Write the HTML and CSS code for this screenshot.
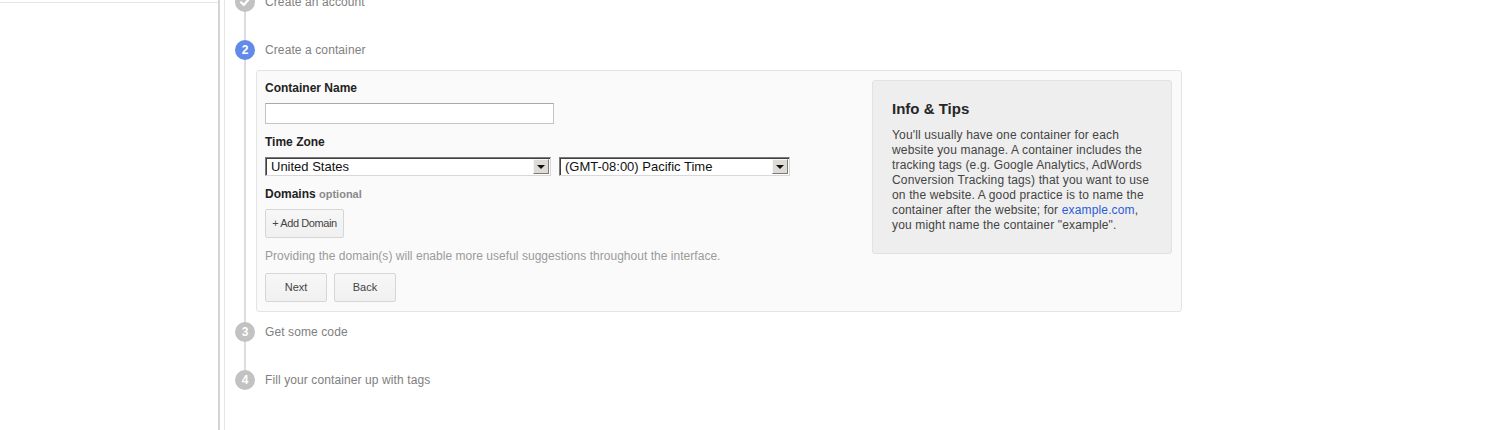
FILE: index.html
```html
<!DOCTYPE html>
<html lang="en">
<head>
<meta charset="utf-8">
<title>Create a container</title>
<link rel="stylesheet" href="styles.css">
</head>
<body>
<div class="page">
  <aside class="sidebar"><div class="sidebar-top"></div></aside>
  <main class="main">
    <ol class="steps">
      <li class="step">
        <div class="step-head">
          <span class="badge badge-done"><svg width="12" height="12" viewBox="0 0 12 12"><path d="M2 6.3 L4.8 9 L10 3" fill="none" stroke="#fff" stroke-width="2.2" stroke-linecap="round" stroke-linejoin="round"/></svg></span>
          <span class="step-title">Create an account</span>
        </div>
      </li>
      <li class="step step-open">
        <div class="step-head">
          <span class="badge badge-active">2</span>
          <span class="step-title">Create a container</span>
        </div>
        <div class="panel">
          <form class="form">
            <label class="label" for="cname">Container Name</label>
            <input class="text-input" id="cname" type="text">
            <div class="label label-gap">Time Zone</div>
            <div class="select-row">
              <div class="select select-country"><span class="select-value">United States</span><span class="select-arrow"><span class="tri"></span></span></div>
              <div class="select select-zone"><span class="select-value">(GMT-08:00) Pacific Time</span><span class="select-arrow"><span class="tri"></span></span></div>
            </div>
            <div class="label label-gap">Domains <span class="optional">optional</span></div>
            <button type="button" class="btn btn-add">+ Add Domain</button>
            <p class="hint">Providing the domain(s) will enable more useful suggestions throughout the interface.</p>
            <div class="btn-row">
              <button type="button" class="btn btn-nav">Next</button>
              <button type="button" class="btn btn-nav">Back</button>
            </div>
          </form>
          <aside class="tips">
            <h2 class="tips-title">Info &amp; Tips</h2>
            <p class="tips-text">You'll usually have one container for each website you manage. A container includes the tracking tags (e.g. Google Analytics, AdWords Conversion Tracking tags) that you want to use on the website. A good practice is to name the container after the website; for <a href="#" class="link">example.com</a>, you might name the container "example".</p>
          </aside>
        </div>
      </li>
      <li class="step">
        <div class="step-head">
          <span class="badge">3</span>
          <span class="step-title">Get some code</span>
        </div>
      </li>
      <li class="step step-last">
        <div class="step-head">
          <span class="badge">4</span>
          <span class="step-title">Fill your container up with tags</span>
        </div>
      </li>
    </ol>
  </main>
</div>
</body>
</html>
```
FILE: styles.css
```css
* { box-sizing: border-box; }
html, body { margin: 0; padding: 0; background: #fff; }
body {
  font-family: "Liberation Sans", Arial, sans-serif;
  font-size: 12px;
  color: #222;
  overflow: hidden;
}
.page {
  display: flex;
  min-height: 100vh;
  height: 430px;
}
.sidebar {
  width: 220px;
  flex: none;
  border-right: 2px solid #d4d4d4;
}
.sidebar-top {
  height: 3px;
  border-bottom: 1px solid #e6e6e6;
}
.main {
  flex: 1;
  margin-left: 4px;
  border-left: 1px solid #e6e6e6;
  padding-left: 10px;
}
.steps {
  list-style: none;
  margin: -8px 0 0 0;
  padding: 0;
}
.step {
  position: relative;
  padding-bottom: 28px;
}
.step-open { padding-bottom: 10px; }
.step::before {
  content: "";
  position: absolute;
  left: 9px;
  top: 10px;
  bottom: -10px;
  width: 2px;
  background: #dddddd;
}
.step-last::before { display: none; }
.step-head {
  display: flex;
  align-items: center;
  gap: 10px;
  height: 20px;
}
.badge {
  position: relative;
  z-index: 1;
  width: 20px;
  height: 20px;
  border-radius: 50%;
  background: #c2c2c2;
  color: #fff;
  font-weight: bold;
  font-size: 12px;
  display: flex;
  align-items: center;
  justify-content: center;
  flex: none;
}
.badge-active { background: #628ae9; }
.step-title {
  color: #808080;
  font-size: 12px;
  letter-spacing: 0.1px;
}
.panel {
  margin: 10px 0 0 21px;
  width: 926px;
  border: 1px solid #e4e4e4;
  border-radius: 3px;
  background: #fafafa;
  padding: 10px 9px 9px 8px;
  display: flex;
  justify-content: space-between;
  align-items: flex-start;
}
.form {
  display: flex;
  flex-direction: column;
  align-items: flex-start;
}
.label {
  font-weight: bold;
  font-size: 12px;
  line-height: 14px;
  color: #222;
  margin-bottom: 8px;
}
.label-gap { margin-top: 11px; }
.optional {
  font-size: 11px;
  color: #8a8a8a;
}
.text-input {
  width: 289px;
  height: 21px;
  border: 1px solid #c4c4c4;
  border-top-color: #a8a8a8;
  background: #fff;
  margin: 0;
  padding: 2px 4px;
  font: inherit;
}
.select-row {
  display: flex;
  gap: 8px;
}
.select {
  height: 19px;
  display: flex;
  align-items: stretch;
  background: #fff;
  border: 1px solid #7a7a7a;
  border-right-color: #d8d8d8;
  border-bottom-color: #d8d8d8;
  box-shadow: inset 1px 1px 0 #404040;
  padding: 1px 1px 1px 2px;
}
.select-country { width: 286px; }
.select-zone { width: 231px; }
.select-value {
  flex: 1;
  font-size: 13px;
  line-height: 15px;
  color: #111;
  padding-left: 3px;
  white-space: nowrap;
  overflow: hidden;
}
.select-arrow {
  width: 16px;
  flex: none;
  background: #dedbd6;
  border: 1px solid;
  border-color: #f6f6f6 #7b7b7b #7b7b7b #f6f6f6;
  display: flex;
  align-items: center;
  justify-content: center;
}
.tri {
  width: 0;
  height: 0;
  border-left: 4px solid transparent;
  border-right: 4px solid transparent;
  border-top: 4px solid #111;
}
.btn {
  font-family: "Liberation Sans", Arial, sans-serif;
  font-size: 11px;
  color: #444;
  height: 29px;
  border: 1px solid #d6d6d6;
  border-radius: 2px;
  background: linear-gradient(#f7f7f7, #f0f0f0);
  padding: 0 0 2px 0;
  margin: 0;
}
.btn-add { width: 79px; letter-spacing: -0.4px; }
.btn-nav { width: 62px; }
.hint {
  margin: 11px 0 10px 0;
  line-height: 14px;
  color: #9a9a9a;
  font-size: 12px;
  letter-spacing: 0.03px;
}
.btn-row {
  display: flex;
  gap: 7px;
}
.tips {
  width: 300px;
  flex: none;
  margin-top: -1px;
  background: #eeeeee;
  border: 1px solid #e2e2e2;
  border-radius: 3px;
  padding: 19px 17px 20px 19px;
}
.tips-title {
  margin: 0 0 10px 0;
  font-size: 15px;
  line-height: 18px;
  font-weight: bold;
  color: #262626;
}
.tips-text {
  margin: 0;
  font-size: 12px;
  line-height: 15px;
  color: #444;
  letter-spacing: 0.15px;
}
.link {
  color: #2a5bd7;
  text-decoration: none;
}
```
